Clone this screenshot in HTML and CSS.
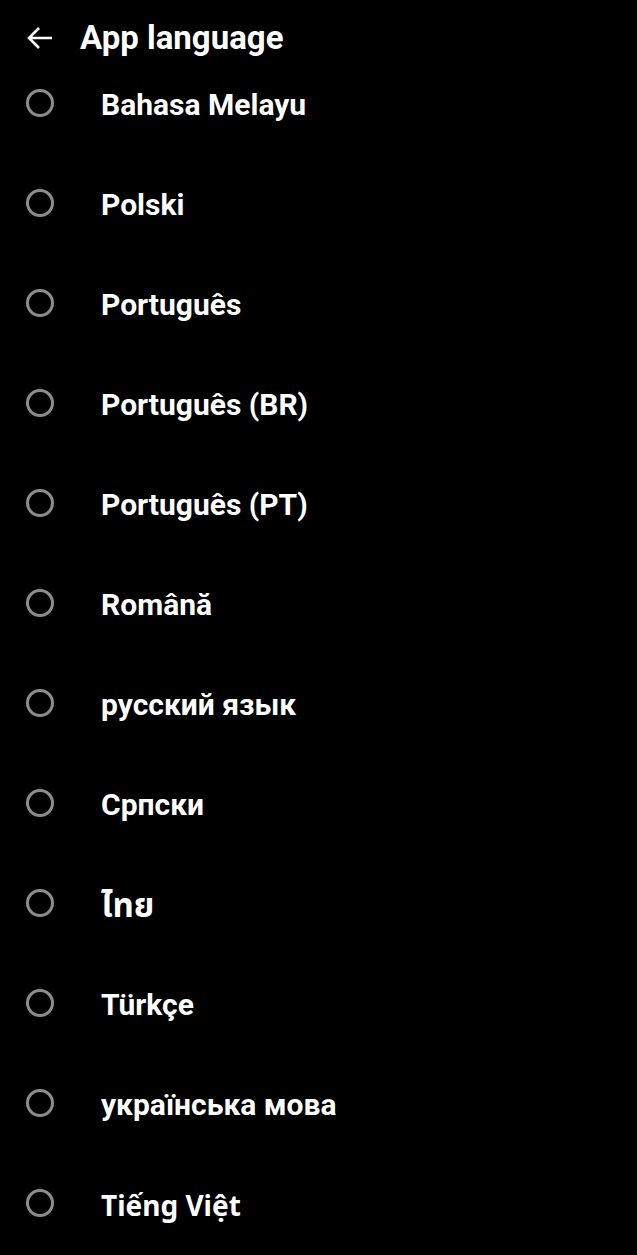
FILE: index.html
```html
<!DOCTYPE html>
<html>
<head>
<meta charset="utf-8">
<link rel="stylesheet" href="styles.css">
</head>
<body>
<header class="header">
  <svg class="back" width="28" height="28" viewBox="0 0 28 28"><path d="M26 14H3M13 4L3 14l10 10" fill="none" stroke="#fff" stroke-width="2.6" stroke-linecap="butt" stroke-linejoin="miter"/></svg>
  <h1 class="title">App language</h1>
</header>
<ul class="list">
  <li class="item"><span class="radio"></span><span class="label">Bahasa Melayu</span></li>
  <li class="item"><span class="radio"></span><span class="label">Polski</span></li>
  <li class="item"><span class="radio"></span><span class="label">Português</span></li>
  <li class="item"><span class="radio"></span><span class="label">Português (BR)</span></li>
  <li class="item"><span class="radio"></span><span class="label">Português (PT)</span></li>
  <li class="item"><span class="radio"></span><span class="label">Română</span></li>
  <li class="item"><span class="radio"></span><span class="label">русский язык</span></li>
  <li class="item"><span class="radio"></span><span class="label">Српски</span></li>
  <li class="item"><span class="radio"></span><span class="label thai">ไทย</span></li>
  <li class="item"><span class="radio"></span><span class="label">Türkçe</span></li>
  <li class="item"><span class="radio"></span><span class="label">українська мова</span></li>
  <li class="item"><span class="radio"></span><span class="label viet">Tiếng Việt</span></li>
</ul>
</body>
</html>
```
FILE: styles.css
```css
html, body {
  margin: 0;
  padding: 0;
  background: #000;
  color: #fff;
  font-family: Roboto, "Noto Sans", "Liberation Sans", sans-serif;
}
.header {
  display: flex;
  align-items: center;
  height: 34px;
  padding: 21px 0 0 26px;
  margin-bottom: -2px;
  box-sizing: content-box;
}
.back {
  display: block;
  width: 28px;
  height: 28px;
}
.title {
  margin: 0 0 0 26px;
  font-size: 33px;
  font-weight: 700;
  line-height: 34px;
  letter-spacing: 0;
}
.list {
  list-style: none;
  margin: 0;
  padding: 0;
}
.item {
  display: flex;
  align-items: center;
  height: 100px;
  padding-left: 26px;
}
.radio {
  width: 22px;
  height: 22px;
  border: 3px solid #8c8c8c;
  border-radius: 50%;
  flex: none;
}
.label {
  margin-left: 47px;
  padding-top: 3px;
  font-size: 30px;
  font-weight: 700;
  line-height: 34px;
}
.thai {
  font-family: "Noto Sans", "Noto Sans Thai", "DejaVu Sans", sans-serif;
  font-size: 33px;
}
.viet {
  font-family: "Noto Sans", Roboto, sans-serif;
  font-size: 28px;
}
```
